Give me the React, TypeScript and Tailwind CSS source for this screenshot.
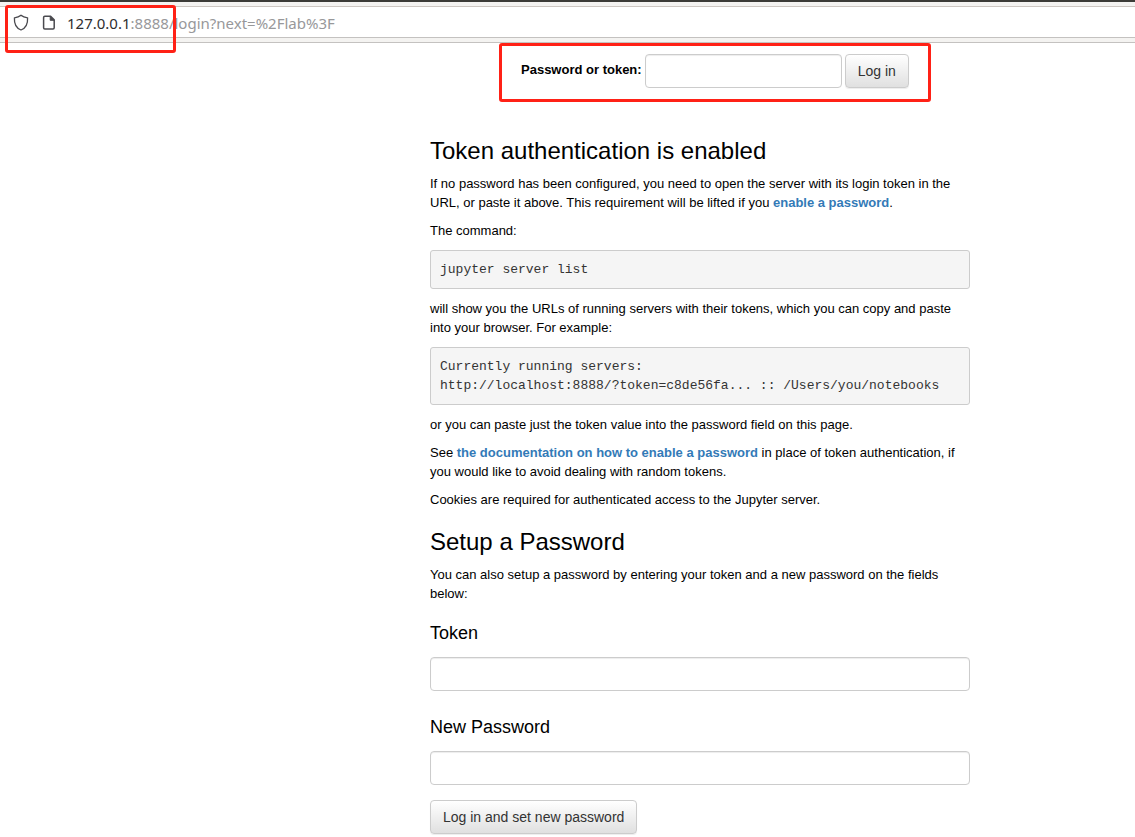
import type { ReactNode } from "react";

const fieldClass =
  "h-[34px] rounded-[4px] border border-[#cccccc] bg-white px-3 text-sm text-[#555555] shadow-[inset_0_1px_1px_rgba(0,0,0,0.075)] outline-none focus:border-[#66afe9]";

const buttonClass =
  "h-[34px] shrink-0 rounded-[4px] border border-[#cccccc] bg-linear-to-b from-white to-[#e0e0e0] px-3 text-sm text-[#333333] shadow-[0_1px_1px_rgba(0,0,0,0.075)]";

function Highlight({ className }: { className: string }) {
  return (
    <span
      aria-hidden="true"
      className={`pointer-events-none absolute rounded-[3px] border-3 border-[#ff2116] ${className}`}
    />
  );
}

function AddressBar() {
  return (
    <header className="relative border-t-2 border-b border-t-[#3c3b37] border-b-[#c4c2c0] bg-[#f4f3f1] pt-1 pb-1">
      <div className="flex h-8 items-center border-y border-t-[#cdc7c2] border-b-[#c4c2c0] bg-white pt-0.5 pl-3">
        <svg width="18" height="18" viewBox="0 0 18 18" fill="none" stroke="#4a4a4f" strokeWidth="1.3" strokeLinejoin="round" aria-hidden="true">
          <path d="M9 1.2C7.3 2.7 5 3.5 2.4 3.8C2.1 9.5 3.6 14 9 16C14.4 14 15.9 9.5 15.6 3.8C13 3.5 10.7 2.7 9 1.2Z" />
        </svg>
        <svg className="ml-2.5" width="18" height="18" viewBox="0 0 18 18" fill="none" stroke="#4a4a4f" strokeWidth="1.5" strokeLinejoin="round" aria-hidden="true">
          <path d="M4.8 2.3H10.6L14.2 5.9V13.7Q14.2 14.9 13 14.9H4.8Q3.6 14.9 3.6 13.7V3.5Q3.6 2.3 4.8 2.3Z" />
          <path d="M10.2 2.3V6.3H14.2Z" fill="#4a4a4f" strokeWidth="1" />
        </svg>
        <p className="ml-[9px] font-['Noto_Sans',sans-serif] text-[15px] leading-5 text-[#98989a]">
          <span className="text-[#2e2e30]">127.0.0.1</span>:8888/login?next=%2Flab%3F
        </p>
      </div>
      <Highlight className="top-[3px] left-[5px] h-12 w-[171px]" />
    </header>
  );
}

function CodeBlock({ children }: { children: ReactNode }) {
  return (
    <pre className="my-2.5 overflow-x-auto rounded-[3px] border border-[#cccccc] bg-[#f5f5f5] px-[9px] py-[9px] font-['Liberation_Mono',monospace] text-[13px] leading-[19px] text-[#333333]">
      {children}
    </pre>
  );
}

function DocLink({ href, children }: { href: string; children: ReactNode }) {
  return (
    <a href={href} className="font-bold text-[#337ab7] hover:underline">
      {children}
    </a>
  );
}

export default function App() {
  return (
    <div className="min-h-screen bg-white font-['Liberation_Sans',Arial,sans-serif] text-[13px] leading-[19px] text-black">
      <AddressBar />
      <main className="mr-4 ml-[430px] max-w-[540px] pt-[11px] pb-[3px]">
        <form className="relative ml-[91px] flex w-fit gap-[3px]" onSubmit={(e) => e.preventDefault()}>
          <label htmlFor="password" className="mt-1.5 font-bold">
            Password or token:
          </label>
          <input id="password" type="password" className={`${fieldClass} w-[197px]`} />
          <button type="submit" className={buttonClass}>
            Log in
          </button>
          <Highlight className="-top-[11px] -right-[22px] -bottom-[14px] -left-[22px]" />
        </form>

        <section className="mt-[50px]">
          <h1 className="mb-2.5 text-2xl leading-[26px]">Token authentication is enabled</h1>
          <p className="mb-[9px]">
            If no password has been configured, you need to open the server with its login token in the URL, or paste it
            above. This requirement will be lifted if you <DocLink href="#enable-password">enable a password</DocLink>.
          </p>
          <p>The command:</p>
          <CodeBlock>jupyter server list</CodeBlock>
          <p>
            will show you the URLs of running servers with their tokens, which you can copy and paste into your browser.
            For example:
          </p>
          <CodeBlock>
            {"Currently running servers:\nhttp://localhost:8888/?token=c8de56fa... :: /Users/you/notebooks"}
          </CodeBlock>
          <p className="mb-[9px]">or you can paste just the token value into the password field on this page.</p>
          <p className="mb-[9px]">
            See <DocLink href="#password-docs">the documentation on how to enable a password</DocLink> in place of token
            authentication, if you would like to avoid dealing with random tokens.
          </p>
          <p>Cookies are required for authenticated access to the Jupyter server.</p>
        </section>

        <section className="mt-5">
          <h2 className="mb-2.5 text-2xl leading-[26px]">Setup a Password</h2>
          <p>You can also setup a password by entering your token and a new password on the fields below:</p>
          <form className="mt-5" onSubmit={(e) => e.preventDefault()}>
            <label htmlFor="token" className="mb-3.5 block text-lg leading-5">
              Token
            </label>
            <input id="token" type="password" className={`${fieldClass} mb-[26px] block w-full`} />
            <label htmlFor="new-password" className="mb-3.5 block text-lg leading-5">
              New Password
            </label>
            <input id="new-password" type="password" className={`${fieldClass} mb-[15px] block w-full`} />
            <button type="submit" className={`${buttonClass} block`}>
              Log in and set new password
            </button>
          </form>
        </section>
      </main>
    </div>
  );
}
